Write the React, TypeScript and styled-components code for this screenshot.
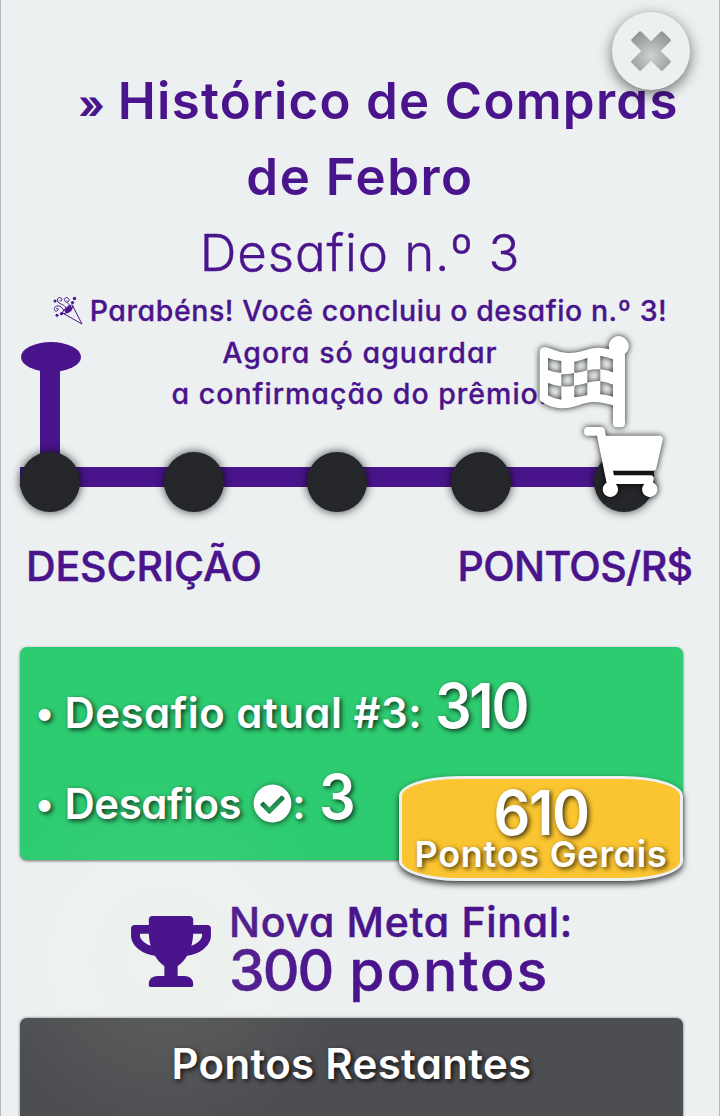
import React from "react";
import styled, { createGlobalStyle } from "styled-components";
import { FaCheckCircle, FaShoppingCart, FaTrophy } from "react-icons/fa";

const purple = "#4a148c";

const GlobalStyle = createGlobalStyle`
  * { box-sizing: border-box; }
  body {
    margin: 0;
    background: #ecf0f1;
    color: ${purple};
    font-family: Inter, "Liberation Sans", sans-serif;
    font-feature-settings: "cv11";
    font-weight: 500;
  }
`;

const Modal = styled.main`
  position: relative;
  display: flex;
  flex-direction: column;
  width: 720px;
  height: 1116px;
  padding: 63px 19px 0;
  overflow: hidden;
  border: solid #b4b8ba;
  border-width: 0 1px;
  background: #ecf0f1;

  > * {
    flex-shrink: 0;
  }
`;

const Glow = styled.div`
  position: absolute;
  left: -16px;
  top: 780px;
  width: 360px;
  height: 360px;
  border-radius: 50%;
  pointer-events: none;
  background: radial-gradient(circle, rgba(255, 255, 200, 0.1), rgba(255, 255, 200, 0) 70%);
`;

const CloseButton = styled.button`
  position: absolute;
  top: 12px;
  right: 29px;
  display: grid;
  place-items: center;
  width: 78px;
  height: 78px;
  padding: 0 0 1px;
  border: 0;
  border-radius: 50%;
  background: #ecf0f1;
  box-shadow: 0 4px 14px rgba(0, 0, 0, 0.55);
`;

const Header = styled.header`
  text-align: center;
  white-space: nowrap;
`;

const Title = styled.h1`
  margin: 0;
  font-size: 51px;
  font-weight: 600;
  line-height: 76px;
`;

const TitleLine = styled.span<{ $spacing: number; $indent?: number }>`
  display: block;
  height: 76px;
  margin-right: -${(p) => p.$indent ?? 0}px;
  letter-spacing: ${(p) => p.$spacing}px;
`;

const Guillemet = styled.span`
  margin-right: -1px;
  font-size: 40px;
  font-weight: 700;
  line-height: 1;
  letter-spacing: 0;
`;

const Subtitle = styled.h2`
  margin: 0;
  font-size: 51px;
  font-weight: 300;
  line-height: 76px;
  letter-spacing: 0.9px;
  -webkit-text-stroke: 0.4px ${purple};
`;

const Message = styled.p`
  margin: -1px 0 0;
  font-size: 28.5px;
  line-height: 41.5px;
  -webkit-text-stroke: 0.3px ${purple};
`;

const MessageLine = styled.span<{ $spacing: number }>`
  display: flex;
  align-items: center;
  justify-content: center;
  gap: 7px;
  height: 41.5px;
  letter-spacing: ${(p) => p.$spacing}px;
`;

const Track = styled.section`
  position: relative;
  display: flex;
  align-items: center;
  justify-content: space-between;
  width: 634px;
  height: 60px;
  margin-top: 37px;
  background: linear-gradient(${purple}, ${purple}) 0 15px / 100% 20px no-repeat;
`;

const Step = styled.div`
  position: relative;
  width: 60px;
  height: 60px;
  border-radius: 50%;
  background: #242629;
  box-shadow: 0 0 10px rgba(0, 0, 0, 0.75);
`;

const StartPost = styled.div`
  position: absolute;
  left: 20px;
  bottom: 50px;
  width: 20px;
  height: 110px;
  background: ${purple};

  &::before {
    content: "";
    position: absolute;
    left: -19px;
    top: -10px;
    width: 60px;
    height: 30px;
    border-radius: 50%;
    background: ${purple};
  }
`;

const Flag = styled.svg`
  position: absolute;
  left: 518.7px;
  top: -117px;
  width: 91.3px;
  height: 93.3px;
  overflow: visible;
  filter: drop-shadow(0 0 3px rgba(0, 0, 0, 0.9));
`;

const Cart = styled(FaShoppingCart)`
  position: absolute;
  left: 564px;
  top: -25px;
  width: 79px;
  height: 70px;
  color: #fff;
  filter: drop-shadow(0 0 3px rgba(0, 0, 0, 0.9));
`;

const Columns = styled.div`
  display: flex;
  justify-content: space-between;
  margin: 29px 7.5px 0 6px;
  font-size: 41px;
  line-height: 50px;
  -webkit-text-stroke: 0.5px ${purple};
`;

const ColumnName = styled.span<{ $spacing: number }>`
  letter-spacing: ${(p) => p.$spacing}px;
`;

const Summary = styled.section`
  position: relative;
  width: 663px;
  height: 213px;
  margin-top: 56px;
  padding: 13px 17px;
  border-radius: 7px;
  background: #2ecc71;
  box-shadow: 0 1px 3px rgba(0, 0, 0, 0.55);
  color: #fff;
  font-size: 42px;
  font-weight: 600;
  text-shadow: 2px 2px 5px rgba(0, 0, 0, 0.75);
`;

const SummaryRow = styled.div`
  display: flex;
  align-items: baseline;
  height: 91px;
  line-height: 91px;
  white-space: pre;
`;

const Bullet = styled.span`
  width: 29px;
  margin-left: -2px;
  margin-right: 0.5px;
  font-size: 38px;
  transform: translateY(-2px);
`;

const RowLabel = styled.span<{ $spacing: number }>`
  letter-spacing: ${(p) => p.$spacing}px;
`;

const Figure = styled.strong<{ $spacing?: number }>`
  display: inline-block;
  font-size: 62px;
  font-weight: 600;
  letter-spacing: ${(p) => p.$spacing ?? 0}px;
  transform: scaleX(0.93);
  transform-origin: left;
`;

const RowFigure = styled(Figure)`
  margin-left: 13px;
`;

const DoneIcon = styled(FaCheckCircle)`
  align-self: center;
  width: 39px;
  height: 39px;
  margin: 14px 0 0 12px;
  filter: drop-shadow(1px 1px 3px rgba(0, 0, 0, 0.6));
`;

const TotalBadge = styled.div`
  position: absolute;
  right: 0;
  bottom: -21px;
  display: flex;
  flex-direction: column;
  align-items: center;
  width: 284px;
  height: 105px;
  padding-top: 11.5px;
  border: 3px solid #ecf0f1;
  border-radius: 60px / 20px;
  background: #fbc531;
  box-shadow: 0 3px 6px rgba(0, 0, 0, 0.75);
`;

const TotalFigure = styled(Figure)`
  line-height: 46px;
  transform-origin: center;
`;

const TotalLabel = styled.span`
  font-size: 36px;
  line-height: 36px;
  letter-spacing: 0.73px;
`;

const Goal = styled.section`
  display: flex;
  align-items: center;
  height: 158.5px;
  padding-left: 111px;
  -webkit-text-stroke: 0.5px ${purple};
`;

const GoalIcon = styled(FaTrophy)`
  position: relative;
  z-index: 1;
  width: 80px;
  height: 71px;
  margin-top: 25px;
`;

const GoalText = styled.div`
  margin: 18px 0 0 18px;
  white-space: nowrap;
`;

const GoalTitle = styled.div`
  font-size: 41px;
  line-height: 48px;
  letter-spacing: 0.7px;
`;

const GoalValue = styled.div`
  display: flex;
  gap: 17px;
  height: 52px;
  font-size: 57px;
  line-height: 50px;
`;

const GoalNumber = styled.span`
  letter-spacing: -2px;
`;

const GoalUnit = styled.span`
  letter-spacing: 2px;
`;

const Remaining = styled.section`
  width: 663px;
  height: 110px;
  border-radius: 7px 7px 0 0;
  background: #4d4e52;
  box-shadow: 0 0 3px rgba(0, 0, 0, 0.55);
  color: #fff;
  font-size: 42px;
  font-weight: 600;
  line-height: 91px;
  letter-spacing: 0.3px;
  text-align: center;
  text-shadow: 2px 2px 5px rgba(0, 0, 0, 0.85);
`;

function CloseIcon() {
  return (
    <svg width="40" height="40" viewBox="0 0 40 40" aria-hidden="true">
      <defs>
        <radialGradient id="cross" gradientUnits="userSpaceOnUse" cx="20" cy="25" r="25">
          <stop offset="0" stopColor="#cfd2d3" />
          <stop offset="1" stopColor="#949697" />
        </radialGradient>
      </defs>
      <path
        d="M9.2 2 20 12.7 30.8 2 38 9.2 27.3 20 38 30.8 30.8 38 20 27.3 9.2 38 2 30.8 12.7 20 2 9.2Z"
        fill="url(#cross)"
        stroke="url(#cross)"
        strokeWidth="3.4"
        strokeLinejoin="round"
      />
    </svg>
  );
}

function PartyIcon() {
  return (
    <svg width="30" height="30" viewBox="0 0 30 30" fill="none" stroke={purple} strokeWidth="1" aria-hidden="true">
      <path d="M9.5 17 29 28 19.5 9.5" />
      <ellipse cx="14.8" cy="13.3" rx="6.3" ry="1.9" transform="rotate(-38 14.8 13.3)" />
      <ellipse cx="15.5" cy="13.6" rx="3.7" ry="2.3" transform="rotate(-38 15.5 13.6)" fill={purple} />
      <path d="M13 12C11 8 8 9 5 6 3 3 6 .5 8 2s0 4-1.5 2.5M16 10C17 7 13 7 11.5 4.5 10.5 2 14 .5 15.5 2.5s0 4-2 2.5M11 15C9 10 5 9 2.5 10.5 0 12.5 2 16 4 15s1-3.5-.8-2.5" />
      <g fill={purple} stroke="none">
        <circle cx="2" cy="5" r="1.5" />
        <circle cx="21.5" cy="2.5" r="1.7" />
        <circle cx="19.5" cy="6.5" r="1.6" />
        <circle cx="8.5" cy="17.7" r="1.6" />
        <circle cx="4" cy="19.3" r="1.5" />
      </g>
    </svg>
  );
}

function FinishFlag() {
  return (
    <Flag viewBox="56 44 274 280" aria-hidden="true">
      <path
        fill="#fff"
        fillRule="evenodd"
        d="M58 94Q60 78 78 81C100 87 118 98 145 98C180 98 205 82 235 82Q254 82 267 87A30 30 0 1 1 314 101V309Q314 321 302 321H290Q278 321 278 309V255C258 249 240 245 222 245C185 245 165 264 130 264C106 264 88 258 70 248Q58 243 58 232Z
        M83 113V149Q102 156 123 158V122Q102 121 83 113Z
        M162 124V158Q182 156 201 150V113Q182 120 162 124Z
        M240 107V147Q260 149 278 156V117Q260 109 240 107Z
        M123 163V198Q143 200 161 196V158Q143 163 123 162Z
        M201 150V187Q220 181 240 182V147Q220 146 201 150Z
        M83 188V225Q102 236 123 238V198Q102 196 83 188Z
        M162 196V231Q182 230 201 224V187Q182 193 162 196Z
        M240 183V222Q260 223 278 229V193Q260 185 240 183Z"
      />
    </Flag>
  );
}

export default function App() {
  return (
    <>
      <GlobalStyle />
      <Modal>
        <Header>
          <Title>
            <TitleLine $spacing={1.25} $indent={37}>
              <Guillemet>»</Guillemet> Histórico de Compras
            </TitleLine>
            <TitleLine $spacing={1.5}>de Febro</TitleLine>
          </Title>
          <Subtitle>Desafio n.º 3</Subtitle>
          <Message>
            <MessageLine $spacing={0.56}>
              <PartyIcon />
              Parabéns! Você concluiu o desafio n.º 3!
            </MessageLine>
            <MessageLine $spacing={1.05}>Agora só aguardar</MessageLine>
            <MessageLine $spacing={1}>a confirmação do prêmio.</MessageLine>
          </Message>
        </Header>

        <Track>
          <StartPost />
          {[1, 2, 3, 4, 5].map((step) => (
            <Step key={step} />
          ))}
          <FinishFlag />
          <Cart />
        </Track>

        <Columns>
          <ColumnName $spacing={-0.1}>DESCRIÇÃO</ColumnName>
          <ColumnName $spacing={-0.6}>PONTOS/R$</ColumnName>
        </Columns>

        <Summary>
          <SummaryRow>
            <Bullet>•</Bullet>
            <RowLabel $spacing={0.45}>Desafio atual #3:</RowLabel>
            <RowFigure $spacing={-2.5}>310</RowFigure>
          </SummaryRow>
          <SummaryRow>
            <Bullet>•</Bullet>
            <RowLabel $spacing={-0.5}>Desafios</RowLabel>
            <DoneIcon />
            <RowLabel $spacing={0}>:</RowLabel>
            <RowFigure>3</RowFigure>
          </SummaryRow>
          <TotalBadge>
            <TotalFigure $spacing={-1.5}>610</TotalFigure>
            <TotalLabel>Pontos Gerais</TotalLabel>
          </TotalBadge>
        </Summary>

        <Goal>
          <GoalIcon />
          <GoalText>
            <GoalTitle>Nova Meta Final:</GoalTitle>
            <GoalValue>
              <GoalNumber>300</GoalNumber>
              <GoalUnit>pontos</GoalUnit>
            </GoalValue>
          </GoalText>
        </Goal>

        <Remaining>Pontos Restantes</Remaining>
        <Glow />
        <CloseButton aria-label="Fechar">
          <CloseIcon />
        </CloseButton>
      </Modal>
    </>
  );
}
